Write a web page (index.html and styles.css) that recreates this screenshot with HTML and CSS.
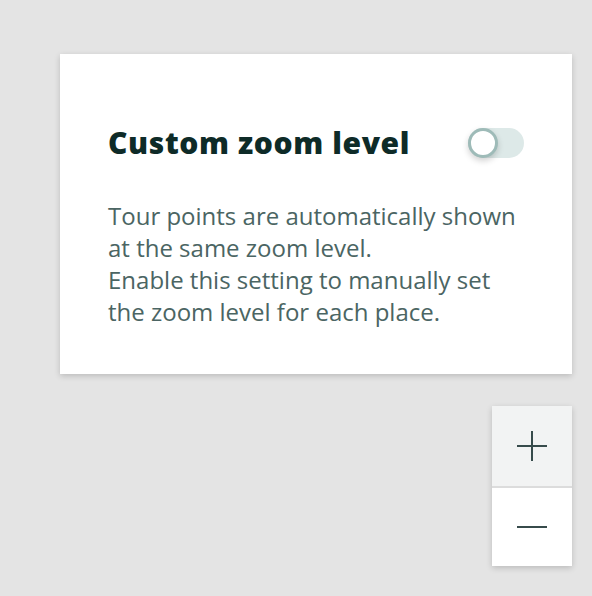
FILE: index.html
```html
<!DOCTYPE html>
<html>
<head>
<meta charset="utf-8">
<link rel="stylesheet" href="styles.css">
</head>
<body>
<div class="page">
  <div class="card">
    <div class="card-head">
      <h2 class="title">Custom zoom level</h2>
      <div class="toggle"><span class="knob"></span></div>
    </div>
    <p class="desc">Tour points are automatically shown<br>at the same zoom level.<br>Enable this setting to manually set<br>the zoom level for each place.</p>
  </div>
  <div class="zoom">
    <button class="zbtn zin" aria-label="Zoom in">
      <svg width="32" height="32" viewBox="0 0 32 32"><path d="M16 1v30M1 16h30" stroke="#374b4b" stroke-width="2" fill="none"/></svg>
    </button>
    <button class="zbtn zout" aria-label="Zoom out">
      <svg width="32" height="32" viewBox="0 0 32 32"><path d="M1 16h30" stroke="#374b4b" stroke-width="2" fill="none"/></svg>
    </button>
  </div>
</div>
</body>
</html>
```

FILE: styles.css
```css
html, body {
  margin: 0;
  padding: 0;
}
body {
  background: #e4e4e4;
  width: 592px;
  height: 596px;
  overflow: hidden;
  font-family: "Open Sans", "Noto Sans", sans-serif;
}
.page {
  padding: 54px 20px 0 60px;
}
.card {
  width: 512px;
  height: 320px;
  box-sizing: border-box;
  background: #fff;
  box-shadow: 0 2px 6px rgba(0,0,0,0.18);
  padding: 69px 48px 0 48px;
}
.card-head {
  display: flex;
  align-items: center;
  justify-content: space-between;
  height: 40px;
}
.title {
  margin: 0;
  font-size: 30px;
  line-height: 40px;
  font-weight: 800;
  color: #0e2b28;
  letter-spacing: 0.6px;
}
.toggle {
  width: 56px;
  height: 30px;
  border-radius: 15px;
  background: #dde9e8;
  position: relative;
}
.knob {
  position: absolute;
  left: 0;
  top: 0;
  width: 30px;
  height: 30px;
  box-sizing: border-box;
  border-radius: 50%;
  background: #fff;
  border: 3px solid #9ebbb8;
  box-shadow: 0 3px 6px rgba(0,0,0,0.18);
}
.desc {
  margin: 37px 0 0 0;
  font-size: 24px;
  line-height: 32px;
  color: #4b6563;
}
.zoom {
  margin: 32px 0 0 432px;
  width: 80px;
  display: flex;
  flex-direction: column;
  box-shadow: 0 2px 6px rgba(0,0,0,0.18);
}
.zbtn {
  width: 80px;
  height: 78px;
  border: 0;
  padding: 0;
  display: flex;
  align-items: center;
  justify-content: center;
  background: #fff;
}
.zin {
  height: 82px;
  background: #f2f3f3;
  border-bottom: 2px solid #dcdcdc;
}
```
